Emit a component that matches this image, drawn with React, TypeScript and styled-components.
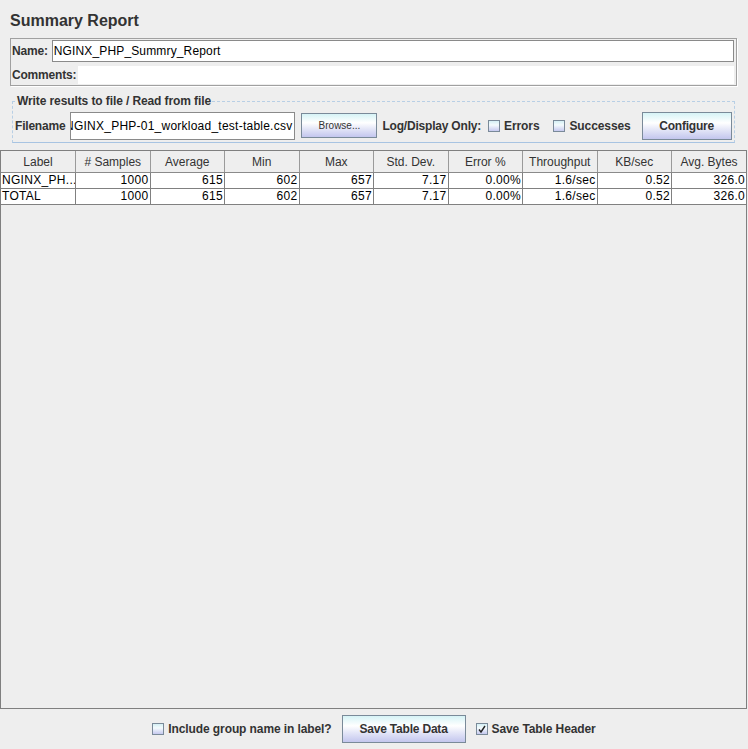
import styled, { createGlobalStyle } from 'styled-components'

const GlobalStyle = createGlobalStyle`
  html, body {
    margin: 0;
    padding: 0;
    background: #eeeeee;
  }
  body {
    font-family: "Liberation Sans", Arial, sans-serif;
    font-size: 12px;
    color: #333333;
  }
`

const Page = styled.div`
  width: 748px;
  height: 749px;
  display: flex;
  flex-direction: column;
  background: #eeeeee;
  overflow: hidden;
`

const Title = styled.div`
  padding: 11px 0 0 10px;
  box-sizing: border-box;
  height: 38px;
  font-size: 16px;
  font-weight: bold;
  line-height: 20px;
  color: #333333;
`

const NamePanel = styled.div`
  margin: 0 11px 0 10px;
  padding: 1px 2px 1px 1px;
  border: 1px solid #a0a0a0;
  box-shadow: 1px 1px 0 #ffffff;
  display: flex;
  flex-direction: column;
  gap: 4px;
`

const FieldRow = styled.div`
  display: flex;
  align-items: center;
`

const Label = styled.span<{ $gap?: number }>`
  font-weight: bold;
  color: #333333;
  white-space: nowrap;
  letter-spacing: -0.2px;
  margin-right: ${({ $gap }) => $gap ?? 4}px;
`

const TextField = styled.div<{ $height: number; $bordered?: boolean; $alignEnd?: boolean }>`
  flex: 1;
  height: ${({ $height }) => $height}px;
  box-sizing: border-box;
  background: #ffffff;
  border: ${({ $bordered }) => ($bordered ? '1px solid #8a8a8a' : 'none')};
  display: flex;
  align-items: center;
  justify-content: ${({ $alignEnd }) => ($alignEnd ? 'flex-end' : 'flex-start')};
  padding: 0 2px 0 1px;
  overflow: hidden;
  white-space: nowrap;
  letter-spacing: 0.15px;
  color: #000000;
`

const FilePanel = styled.fieldset`
  margin: 8px 13px 0 12px;
  padding: 3px 2px 2px 2px;
  border: 1px dashed #b8cfe5;
  border-bottom: 1px solid #a8c4e2;
  min-width: 0;
`

const Legend = styled.legend`
  margin-left: 1px;
  padding: 0 1px;
  font-weight: bold;
  letter-spacing: -0.1px;
  color: #333333;
  line-height: 14px;
`

const FileRow = styled.div`
  display: flex;
  align-items: center;
  height: 29px;
`

const FileField = styled(TextField)`
  flex: 0 0 225px;
  margin-right: 6px;
  letter-spacing: 0.24px;
`

const Button = styled.button<{ $small?: boolean; $width: number; $height: number }>`
  width: ${({ $width }) => $width}px;
  height: ${({ $height }) => $height}px;
  box-sizing: border-box;
  border: 1px solid #7a8a99;
  background: linear-gradient(
    180deg,
    #d6f3f6 0%,
    #ffffff 38%,
    #e6e8f8 62%,
    #c3c6ee 100%
  );
  font-family: "Liberation Sans", Arial, sans-serif;
  font-size: ${({ $small }) => ($small ? '10px' : '12px')};
  font-weight: ${({ $small }) => ($small ? 'normal' : 'bold')};
  letter-spacing: ${({ $small }) => ($small ? '0' : '-0.2px')};
  color: #333333;
  padding: 0;
  flex: none;
`

const CheckBox = styled.span`
  width: 12px;
  height: 12px;
  box-sizing: border-box;
  border: 1px solid #7a8a99;
  background: linear-gradient(180deg, #d4eff4 0%, #f4fbfd 40%, #c6c9ef 100%);
  display: inline-flex;
  align-items: center;
  justify-content: center;
  margin-right: 4px;
  flex: none;
`

const CheckItem = styled.label<{ $gap?: number }>`
  display: inline-flex;
  align-items: center;
  margin-right: ${({ $gap }) => $gap ?? 0}px;
  font-weight: bold;
  letter-spacing: -0.1px;
  color: #333333;
  white-space: nowrap;
`

const TableArea = styled.div`
  flex: 1;
  margin: 7px 1px 0 0;
  border: 1px solid #7f7f7f;
  background: #eeeeee;
  overflow: hidden;
`

const Table = styled.table`
  width: 100%;
  table-layout: fixed;
  border-collapse: collapse;
  font-size: 12px;
  color: #000000;
`

const HeadCell = styled.th`
  height: 21px;
  padding: 0;
  font-weight: normal;
  text-align: center;
  color: #333333;
  background: #eeeeee;
  border-right: 1px solid #9a9a9a;
  border-bottom: 1px solid #8a8a8a;
  white-space: nowrap;
  overflow: hidden;
  &:last-child {
    border-right: none;
  }
`

const Cell = styled.td<{ $left?: boolean }>`
  height: 15px;
  padding: 0 ${({ $left }) => ($left ? '0 0 1px' : '1px 0 0')};
  text-align: ${({ $left }) => ($left ? 'left' : 'right')};
  background: #ffffff;
  border-right: 1px solid #808080;
  border-bottom: 1px solid #808080;
  white-space: nowrap;
  overflow: hidden;
  line-height: 15px;
  letter-spacing: 0.3px;
  &:last-child {
    border-right: none;
  }
`

const BottomBar = styled.div`
  height: 40px;
  display: flex;
  align-items: center;
  justify-content: center;
  gap: 10px;
`

const columns = [
  'Label',
  '# Samples',
  'Average',
  'Min',
  'Max',
  'Std. Dev.',
  'Error %',
  'Throughput',
  'KB/sec',
  'Avg. Bytes',
]

const rows = [
  ['NGINX_PH...', '1000', '615', '602', '657', '7.17', '0.00%', '1.6/sec', '0.52', '326.0'],
  ['TOTAL', '1000', '615', '602', '657', '7.17', '0.00%', '1.6/sec', '0.52', '326.0'],
]

function Check({ checked, label, gap }: { checked?: boolean; label: string; gap?: number }) {
  return (
    <CheckItem $gap={gap}>
      <CheckBox>
        {checked && (
          <svg width="10" height="10" viewBox="0 0 10 10">
            <path d="M2 5.5 L4 8 L8 2" fill="none" stroke="#222" strokeWidth="1.4" />
          </svg>
        )}
      </CheckBox>
      {label}
    </CheckItem>
  )
}

export default function App() {
  return (
    <>
      <GlobalStyle />
      <Page>
        <Title>Summary Report</Title>

        <NamePanel>
          <FieldRow>
            <Label>Name:</Label>
            <TextField $height={22} $bordered>
              NGINX_PHP_Summry_Report
            </TextField>
          </FieldRow>
          <FieldRow>
            <Label $gap={2}>Comments:</Label>
            <TextField $height={18} />
          </FieldRow>
        </NamePanel>

        <FilePanel>
          <Legend>Write results to file / Read from file</Legend>
          <FileRow>
            <Label $gap={5}>Filename</Label>
            <FileField $height={28} $bordered $alignEnd>
              NGINX_PHP-01_workload_test-table.csv
            </FileField>
            <Button $small $width={76} $height={25}>
              Browse...
            </Button>
            <Label $gap={7} style={{ marginLeft: 5 }}>
              Log/Display Only:
            </Label>
            <Check label="Errors" gap={14} />
            <Check label="Successes" gap={11} />
            <Button $width={90} $height={28}>
              Configure
            </Button>
          </FileRow>
        </FilePanel>

        <TableArea>
          <Table>
            <thead>
              <tr>
                {columns.map((c) => (
                  <HeadCell key={c}>{c}</HeadCell>
                ))}
              </tr>
            </thead>
            <tbody>
              {rows.map((r, i) => (
                <tr key={i}>
                  {r.map((v, j) => (
                    <Cell key={j} $left={j === 0}>
                      {v}
                    </Cell>
                  ))}
                </tr>
              ))}
            </tbody>
          </Table>
        </TableArea>

        <BottomBar>
          <Check label="Include group name in label?" />
          <Button $width={124} $height={28}>
            Save Table Data
          </Button>
          <Check checked label="Save Table Header" />
        </BottomBar>
      </Page>
    </>
  )
}
